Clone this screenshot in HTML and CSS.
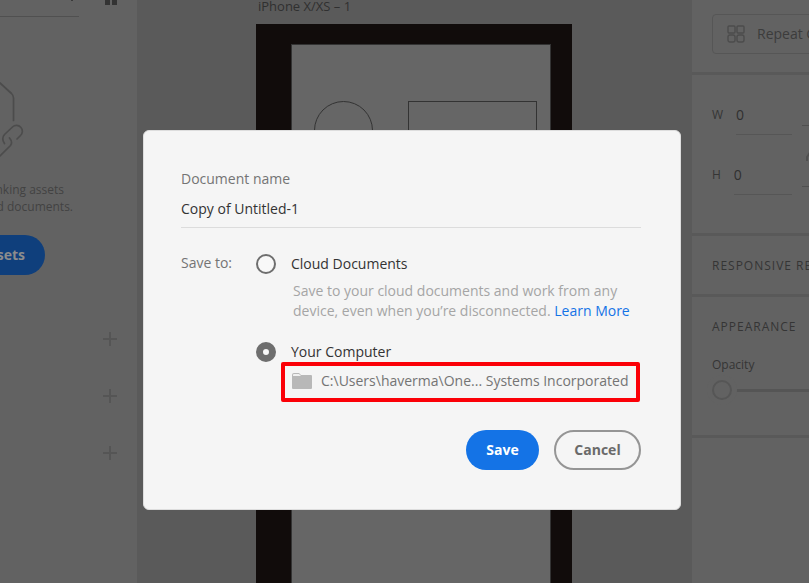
FILE: index.html
```html
<!DOCTYPE html>
<html lang="en">
<head>
<meta charset="utf-8">
<meta name="viewport" content="width=device-width, initial-scale=1">
<title>Save document</title>
<link rel="stylesheet" href="styles.css">
</head>
<body>
<div class="app">
  <aside class="assets">
    <div class="assets-top">
      <svg class="chevron" width="8" height="4" viewBox="0 0 8 4"><path d="M1 -2L4 1L7 -2" fill="none" stroke="#3a3a3a" stroke-width="1"/></svg>
      <svg class="grid-icon" width="12" height="16" viewBox="0 0 12 16"><path d="M0 0h5v5H0zM7 0h5v5H7z" fill="#333"/></svg>
    </div>
    <svg class="link-art" width="26" height="80" viewBox="0 0 26 80" fill="none" stroke="#4c4c4c" stroke-width="1.7" stroke-linecap="round" stroke-linejoin="round">
      <path d="M0 3L11.500 13.500Q13.500 15.500 13.500 18V40.500"/>
      <path d="M17 59L20.500 55.500A5.800 5.800 0 0 0 12.500 47L4.500 54.500Q1 58.500 4.500 63.500"/>
      <path d="M9.500 58Q13 62 10.500 65.500L0 76"/>
    </svg>
    <p class="hint hint-first">linking assets</p>
    <p class="hint">shared documents.</p>
    <button class="link-button" type="button">Link Assets</button>
    <div class="add-list">
      <button class="add" type="button" aria-label="Add color"></button>
      <button class="add" type="button" aria-label="Add character style"></button>
      <button class="add" type="button" aria-label="Add component"></button>
    </div>
  </aside>
  <main class="canvas">
    <div class="artboard">
      <div class="artboard-name">iPhone X/XS – 1</div>
      <div class="frame">
        <div class="screen">
          <div class="circle"></div>
          <div class="box"></div>
        </div>
      </div>
    </div>
  </main>
  <aside class="properties">
    <section class="repeat">
      <button class="repeat-button" type="button">
        <svg width="18" height="18" viewBox="0 0 18 18" fill="none" stroke="#4c4c4c" stroke-width="1.4"><rect x="1" y="1" width="7" height="7" rx="1"/><rect x="10" y="1" width="7" height="7" rx="1"/><rect x="1" y="10" width="7" height="7" rx="2"/><rect x="10" y="10" width="7" height="7" rx="2"/></svg>
        Repeat Grid
      </button>
    </section>
    <section class="size">
      <div class="fields">
        <div class="field"><label for="w">W</label><input id="w" value="0"></div>
        <div class="field"><label for="h">H</label><input id="h" value="0"></div>
      </div>
      <svg class="lock" width="16" height="70" viewBox="0 0 16 70" fill="none" stroke="#505050"><path d="M0 4.500H16M0 65.500H16"/><path d="M5 40V36L9 30" stroke-width="2"/></svg>
    </section>
    <section class="responsive"><h2>RESPONSIVE RESIZE</h2></section>
    <section class="appearance">
      <h2>APPEARANCE</h2>
      <label for="opacity">Opacity</label>
      <input id="opacity" type="range" min="0" max="100" value="0">
    </section>
  </aside>
</div>

<div class="overlay">
  <form class="dialog" role="dialog" aria-label="Save document">
    <label class="name-label" for="name">Document name</label>
    <input class="name" id="name" value="Copy of Untitled-1">
    <div class="destination" role="radiogroup" aria-labelledby="save-to">
      <span class="save-to" id="save-to">Save to:</span>
      <div class="options">
        <div class="option">
          <input type="radio" name="place" id="cloud">
          <label for="cloud">Cloud Documents</label>
        </div>
        <p class="note">Save to your cloud documents and work from any<br>device, even when you’re disconnected. <a href="#">Learn More</a></p>
        <div class="option">
          <input type="radio" name="place" id="computer" checked>
          <label for="computer">Your Computer</label>
        </div>
        <button class="path" type="button">
          <svg width="20" height="16" viewBox="0 0 20 16"><path d="M0 2Q0 0 2 0H7L9 2H19Q20 2 20 3V15Q20 16 19 16H1Q0 16 0 15Z" fill="#b8b8b8"/><path d="M1 3V2Q1 1 2 1H7L9 3Z" fill="#f0f0f0"/></svg>
          C:\Users\haverma\One... Systems Incorporated
        </button>
      </div>
    </div>
    <div class="actions">
      <button class="save" type="submit">Save</button>
      <button class="cancel" type="button">Cancel</button>
    </div>
  </form>
</div>
</body>
</html>
```
FILE: styles.css
```css
* { box-sizing: border-box; }
body { margin: 0; font-family: "Open Sans", "Noto Sans", sans-serif; font-size: 14px; line-height: 20px; }
button, input { font: inherit; }
button { cursor: pointer; }
p, h2 { margin: 0; }

.app { display: flex; height: 100vh; overflow: hidden; background: #5a5a5a; }

.assets { flex: none; width: 137px; overflow: hidden; background: #626262; display: flex; flex-direction: column; }
.assets-top { display: flex; align-items: flex-start; justify-content: space-between; height: 17px; padding-right: 20px; }
.chevron { box-sizing: content-box; flex: none; width: 8px; padding: 0 3px 12px 68px; border-bottom: 1px solid #505050; }
.grid-icon { flex: none; }
.link-art { flex: none; margin-top: 63px; }
.hint { align-self: flex-start; display: flex; justify-content: flex-end; width: 73px; font-size: 12px; line-height: 17px; color: #424242; white-space: nowrap; }
.hint-first { width: 64px; margin-top: 21px; }
.link-button { flex: none; display: flex; justify-content: flex-end; align-items: center; width: 120px; height: 40px; margin: 20px 0 0 -75px; padding: 0 20px; border: 0; border-radius: 20px; background: #0f3f7c; color: #8c8c8c; font-weight: 700; white-space: nowrap; }
.add-list { display: flex; flex-direction: column; align-items: flex-end; gap: 43px; margin-top: 57px; padding-right: 20px; }
.add { width: 14px; height: 14px; padding: 0; border: 0; background: linear-gradient(#555, #555) center / 14px 2px no-repeat, linear-gradient(#555, #555) center / 2px 14px no-repeat; }

.canvas { flex: 1; min-width: 0; padding: 0 120px 0 119px; }
.artboard { height: 100%; display: flex; flex-direction: column; }
.artboard-name { height: 24px; padding-left: 2px; line-height: 12px; font-size: 13px; color: #303030; white-space: nowrap; }
.frame { flex: 1; padding: 20px 21px 0 35px; background: #110c0b; }
.screen { height: 100%; display: flex; justify-content: space-between; padding: 56px 13px 0 22px; border: 1px solid #333; border-bottom: 0; background: #666; }
.circle { width: 59px; height: 59px; border: 1px solid #333; border-radius: 50%; }
.box { width: 129px; height: 60px; border: 1px solid #333; }

.properties { flex: none; width: 117px; overflow: hidden; background: #626262; color: #353535; white-space: nowrap; }
.properties section { padding: 0 0 0 20px; border-bottom: 3px solid #595959; }
.properties h2 { font-size: 12px; line-height: 20px; font-weight: 400; letter-spacing: 1px; }
.properties .repeat { height: 75px; padding-top: 14px; }
.repeat-button { display: flex; align-items: center; gap: 12px; width: 160px; height: 40px; padding: 0 14px; border: 1px solid #565656; border-radius: 4px; background: none; color: #3c3c3c; }
.size { display: flex; justify-content: space-between; height: 161px; }
.fields { display: flex; flex-direction: column; gap: 20px; padding-top: 20px; }
.field { display: flex; align-items: center; gap: 13px; width: 80px; height: 40px; }
.field label { font-size: 12px; }
.field input { flex: 1; min-width: 0; height: 40px; padding: 0; border: 0; border-bottom: 1px solid #565656; background: none; color: #303030; }
.lock { flex: none; margin: 46px -9px 0 0; }
.properties .responsive { padding-top: 20px; height: 61px; }
.properties .appearance { display: flex; flex-direction: column; height: 141px; padding-top: 20px; }
.appearance label { margin-top: 18px; font-size: 12px; }
.appearance input { appearance: none; width: 160px; height: 20px; margin: 5px 0 0; background: linear-gradient(#555, #555) center / 100% 3px no-repeat; }
.appearance input::-webkit-slider-thumb { appearance: none; width: 20px; height: 20px; border: 2px solid #565656; border-radius: 50%; background: #626262; box-shadow: 0 0 0 5px #626262; }

.overlay { position: fixed; inset: 0; display: grid; place-items: center; padding: 57px 0 0 15px; }
.dialog { width: 538px; max-width: 100%; padding: 38px 39px 39px 37px; border: 1px solid #ddd; border-radius: 6px; background: #f5f5f5; color: #333; }
.name-label { display: block; color: #747474; }
.name { display: block; width: 100%; height: 39px; padding: 0; border: 0; border-bottom: 1px solid #dcdcdc; background: none; color: #333; }
.destination { display: flex; margin-top: 25px; }
.save-to { flex: none; width: 75px; color: #747474; }
.options { flex: 1; min-width: 0; }
.option { display: flex; align-items: center; gap: 15px; height: 22px; }
.option input { appearance: none; flex: none; width: 20px; height: 20px; margin: 0; border: 2px solid #6e6e6e; border-radius: 50%; background: #f8f8f8; }
.option input:checked { border-width: 7px; }
.note { margin: 6px 0 20px; padding-left: 37px; color: #a5a5a5; white-space: nowrap; }
.note a { color: #1473e6; text-decoration: none; }
.path { display: flex; align-items: center; gap: 9px; width: 359px; height: 40px; margin: -1px 0 0 25px; padding: 0 7px 2px; border: 4px solid #fb0007; border-radius: 2px; background: none; color: #747474; white-space: nowrap; }
.path svg { flex: none; }
.actions { display: flex; justify-content: flex-end; gap: 15px; margin-top: 28px; }
.actions button { height: 40px; padding: 0; border-radius: 20px; font-weight: 700; }
.save { width: 73px; border: 0; background: #1473e6; color: #fff; }
.cancel { width: 87px; border: 2px solid #959595; background: none; color: #6a6a6a; }
```
